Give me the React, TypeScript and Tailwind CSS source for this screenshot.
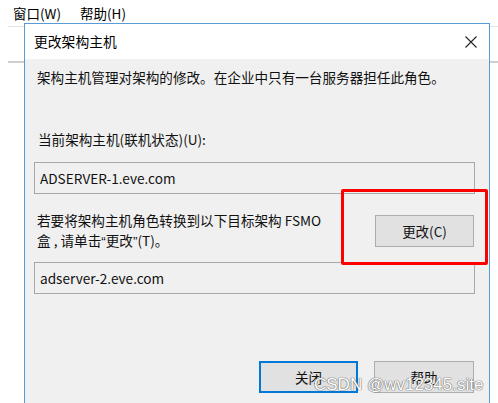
import React from "react";

const font = { fontFamily: '"Noto Sans CJK SC", "Noto Sans", sans-serif' };
const latin = { fontFamily: '"Liberation Sans", Arial, sans-serif' };

function Btn({ children, primary }: { children: React.ReactNode; primary?: boolean }) {
  return (
    <div
      className={
        "flex items-center justify-center h-[32px] bg-[#e1e1e1] text-[13.5px] text-[#111] " +
        (primary ? "border-2 border-[#0078d7]" : "border border-[#adadad]")
      }
    >
      {children}
    </div>
  );
}

export default function App() {
  return (
    <div className="relative w-[498px] h-[403px] overflow-hidden bg-white text-black" style={font}>
      {/* underlying window */}
      <div className="ml-[8px]">
        <div className="h-[27px] border-b border-[#e3e3e3] flex items-center gap-[19px] pl-[5px] text-[13.5px] leading-[20px]">
          <span>窗口(W)</span>
          <span>帮助(H)</span>
        </div>
        <div className="h-[34px]" />
        <div className="h-[2px] bg-[#cfcfcf]" />
      </div>

      {/* dialog */}
      <div className="absolute left-[24px] top-[23px] w-[466px] h-[392px] border border-[#5b9bd5] bg-[#f0f0f0] flex flex-col">
        <div className="h-[35px] bg-white flex items-center justify-between pl-[9px] pr-[12px] text-[13.8px]">
          <span>更改架构主机</span>
          <svg width="12" height="12" viewBox="0 0 12 12">
            <path d="M0.5 0.5 L11.5 11.5 M11.5 0.5 L0.5 11.5" stroke="#222" strokeWidth="1.1" />
          </svg>
        </div>
        <div className="flex flex-col pl-[9px] pr-[14px] text-[13.6px] leading-[20px] text-[#111]">
          <p className="mt-[8px] pl-[3px]">架构主机管理对架构的修改。在企业中只有一台服务器担任此角色。</p>
          <p className="mt-[42px] pl-[4px]">当前架构主机(联机状态)(U):</p>
          <div className="mt-[13px] h-[32px] border border-[#a8a8a8] flex items-center pl-[5px]">
            ADSERVER-1.eve.com
          </div>
          <div className="mt-[16px] flex items-start justify-between">
            <div className="pl-[3px]">
              <p>若要将架构主机角色转换到以下目标架构 FSMO</p>
              <p>
                盒 , 请单击<span style={latin}>“</span>更改<span style={latin}>”</span>(T)。
              </p>
            </div>
            <div className="mt-[5px] mr-[1px] w-[99px]">
              <Btn>更改(C)</Btn>
            </div>
          </div>
          <div className="mt-[10px] h-[32px] border border-[#a8a8a8] flex items-center pl-[5px]">
            adserver-2.eve.com
          </div>
          <div className="mt-[67px] flex justify-end gap-[16px] pr-[1px]">
            <div className="w-[99px]">
              <Btn primary>关闭</Btn>
            </div>
            <div className="w-[100px]">
              <Btn>帮助</Btn>
            </div>
          </div>
        </div>

        {/* red highlight */}
        <div className="absolute left-[316px] top-[165px] w-[147px] h-[76px] border-[3px] border-[#ff0000] rounded-[2px]" />

        {/* watermark */}
        <div
          className="absolute left-[289px] top-[351px] text-[17px] text-white leading-[20px] whitespace-nowrap"
          style={{
            fontFamily: '"Liberation Sans", Arial, sans-serif',
            textShadow: "0 0 1px #666, 0 0 1px #666, 0 0 1px #888",
          }}
        >
          CSDN @wv12345.site
        </div>
      </div>
    </div>
  );
}
